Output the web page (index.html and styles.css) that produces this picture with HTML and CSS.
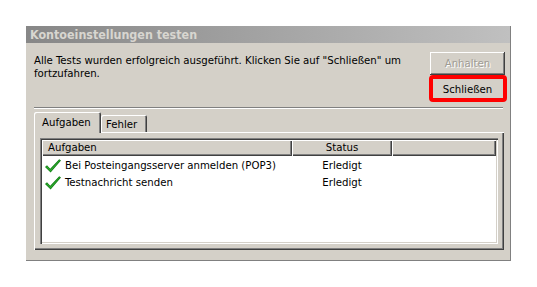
FILE: index.html
```html
<!DOCTYPE html>
<html lang="de">
<head>
<meta charset="utf-8">
<title>Kontoeinstellungen testen</title>
<link rel="stylesheet" href="styles.css">
</head>
<body>
<div class="dialog">
  <div class="titlebar">Kontoeinstellungen testen</div>
  <div class="content">
    <div class="top">
      <p class="message">Alle Tests wurden erfolgreich ausgeführt. Klicken Sie auf "Schließen" um fortzufahren.</p>
      <div class="buttons">
        <button class="btn" disabled>Anhalten</button>
        <div class="highlight-wrap">
          <button class="btn">Schließen</button>
          <span class="highlight"></span>
        </div>
      </div>
    </div>
    <div class="separator"></div>
    <div class="tabs">
      <div class="tab active">Aufgaben</div>
      <div class="tab">Fehler</div>
    </div>
    <div class="panel">
      <div class="list">
        <div class="list-header">
          <div class="hcell col-task">Aufgaben</div>
          <div class="hcell col-status">Status</div>
          <div class="hcell col-rest"></div>
        </div>
        <div class="row">
          <div class="cell col-task">
            <svg class="check" width="16" height="14" viewBox="0 0 16 14"><polygon points="0,8 2,6.3 5.2,9.8 14.2,0.3 16,1.6 5.6,13.6" fill="#0d7d12"/><polygon points="1,7.9 2,7.1 5.3,10.7 14.4,1.2 15,1.6 5.6,12.4" fill="#2fa82f"/></svg>
            <span>Bei Posteingangsserver anmelden (POP3)</span>
          </div>
          <div class="cell col-status">Erledigt</div>
        </div>
        <div class="row">
          <div class="cell col-task">
            <svg class="check" width="16" height="14" viewBox="0 0 16 14"><polygon points="0,8 2,6.3 5.2,9.8 14.2,0.3 16,1.6 5.6,13.6" fill="#0d7d12"/><polygon points="1,7.9 2,7.1 5.3,10.7 14.4,1.2 15,1.6 5.6,12.4" fill="#2fa82f"/></svg>
            <span>Testnachricht senden</span>
          </div>
          <div class="cell col-status">Erledigt</div>
        </div>
      </div>
    </div>
  </div>
</div>
</body>
</html>
```
FILE: styles.css
```css
body {
  margin: 0;
  background: #fff;
  font-family: "DejaVu Sans Condensed", "DejaVu Sans", sans-serif;
  font-size: 11.3px;
  color: #000;
}

.dialog {
  margin: 26px 0 0 26px;
  width: 485px;
  height: 235px;
  box-sizing: border-box;
  background: #d4d0c8;
  border-right: 1px solid #808080;
  border-bottom: 1px solid #808080;
  display: flex;
  flex-direction: column;
}

.titlebar {
  height: 17px;
  line-height: 17px;
  padding-left: 4px;
  background: linear-gradient(to right, #878787, #c0c0c0);
  color: #d8d6d0;
  font-weight: bold;
  font-size: 12.4px;
}

.content {
  padding: 0 5px 0 8px;
  display: flex;
  flex-direction: column;
}

.top {
  display: flex;
  margin-top: 9px;
  height: 49px;
}

.message {
  flex: 1;
  margin: 2px 0 0 0;
  line-height: 13px;
  padding-right: 14px;
}

.buttons {
  display: flex;
  flex-direction: column;
  gap: 3px;
  width: 75px;
}

.btn {
  display: block;
  width: 75px;
  height: 23px;
  padding: 0;
  border: none;
  background: #d4d0c8;
  font: inherit;
  color: #000;
  box-shadow: inset -1px -1px #404040, inset 1px 1px #fff, inset -2px -2px #808080;
}

.btn:disabled {
  color: #a09c94;
  text-shadow: 1px 1px #fff;
}

.highlight-wrap {
  position: relative;
}

.highlight {
  position: absolute;
  top: -3px;
  left: -1px;
  right: -2px;
  bottom: -1px;
  border: 4px solid #f00;
  border-radius: 4px;
}

.separator {
  margin-top: 6px;
  width: 469px;
  height: 0;
  border-top: 1px solid #808080;
  border-bottom: 1px solid #fff;
}

.tabs {
  margin-top: 3px;
  height: 20px;
  display: flex;
  align-items: flex-end;
  position: relative;
  z-index: 1;
}

.tab {
  height: 17px;
  width: 46px;
  padding: 3px 0 0 5px;
  box-sizing: border-box;
  line-height: 13px;
  background: #d4d0c8;
  border-top-left-radius: 2px;
  border-top-right-radius: 2px;
  box-shadow: inset 1px 1px #fff, inset -1px 0 #404040, inset -2px 0 #808080;
}

.tab.active {
  height: 21px;
  margin-bottom: -1px;
  width: 67px;
  padding: 4px 0 0 8px;
}

.panel {
  width: 470px;
  height: 118px;
  box-sizing: border-box;
  padding: 6px;
  box-shadow: inset 1px 1px #fff, inset -1px -1px #404040, inset -2px -2px #808080;
}

.list {
  height: 100%;
  box-sizing: border-box;
  padding: 2px;
  background: #fff;
  box-shadow: inset 1px 1px #808080, inset 2px 2px #404040, inset -1px -1px #fff, inset -2px -2px #d4d0c8;
}

.list-header {
  display: flex;
  height: 16px;
}

.hcell {
  box-sizing: border-box;
  height: 16px;
  line-height: 13px;
  padding-top: 1px;
  background: #d4d0c8;
  box-shadow: inset 1px 1px #fff, inset -1px -1px #404040, inset -2px -2px #808080;
}

.col-task {
  width: 250px;
  flex: none;
}

.col-status {
  width: 100px;
  flex: none;
  text-align: center;
}

.col-rest {
  flex: 1;
}

.list-header .col-task {
  padding-left: 6px;
}

.row {
  display: flex;
  height: 17px;
  align-items: center;
}

.list-header + .row {
  margin-top: 1px;
}

.cell.col-task {
  display: flex;
  align-items: center;
  gap: 4px;
  padding-left: 3px;
  box-sizing: border-box;
}

.check {
  flex: none;
}
```
